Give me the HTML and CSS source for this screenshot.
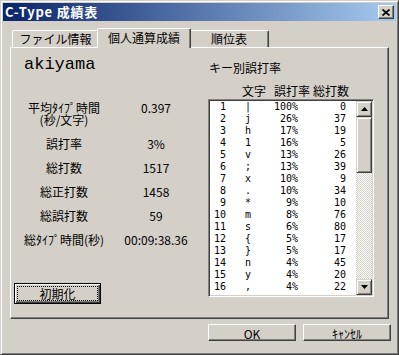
FILE: index.html
```html
<!DOCTYPE html>
<html lang="ja">
<head>
  <meta charset="UTF-8">
  <title>C-Type 成績表</title>
  <link rel="stylesheet" href="styles.css">
</head>
<body>
  <div class="window">
    <div class="titlebar">
      <span class="title">C-Type 成績表</span>
      <button class="close-btn" aria-label="閉じる">
        <svg width="8" height="7" viewBox="0 0 8 7">
          <path d="M0.5 0.5 L7.5 6.5 M7.5 0.5 L0.5 6.5" stroke="#000" stroke-width="1.7" fill="none"/>
        </svg>
      </button>
    </div>

    <!-- tab strip -->
    <div class="tabs">
      <div class="tab">ファイル情報</div>
      <div class="tab active">個人通算成績</div>
      <div class="tab last">順位表</div>
    </div>

    <div class="panel">
      <div class="left-col">
        <div class="username">akiyama</div>
        <div class="stats">
          <div class="stat-label">平均ﾀｲﾌﾟ時間<br>(秒/文字)</div><div class="stat-value">0.397</div>
          <div class="stat-label">誤打率</div><div class="stat-value">3%</div>
          <div class="stat-label">総打数</div><div class="stat-value">1517</div>
          <div class="stat-label">総正打数</div><div class="stat-value">1458</div>
          <div class="stat-label">総誤打数</div><div class="stat-value">59</div>
          <div class="stat-label">総ﾀｲﾌﾟ時間(秒)</div><div class="stat-value">00:09:38.36</div>
        </div>
        <button class="btn btn-default">初期化</button>
      </div>

      <div class="right-col">
        <div class="list-title">キー別誤打率</div>
        <div class="list-header">
          <span>文字</span><span>誤打率</span><span>総打数</span>
        </div>
        <div class="listbox">
          <div class="list-rows">
            <div class="row"><span class="num">1</span><span class="ch">|</span><span class="pct">100%</span><span class="cnt">0</span></div>
            <div class="row"><span class="num">2</span><span class="ch">j</span><span class="pct">26%</span><span class="cnt">37</span></div>
            <div class="row"><span class="num">3</span><span class="ch">h</span><span class="pct">17%</span><span class="cnt">19</span></div>
            <div class="row"><span class="num">4</span><span class="ch">1</span><span class="pct">16%</span><span class="cnt">5</span></div>
            <div class="row"><span class="num">5</span><span class="ch">v</span><span class="pct">13%</span><span class="cnt">26</span></div>
            <div class="row"><span class="num">6</span><span class="ch">;</span><span class="pct">13%</span><span class="cnt">39</span></div>
            <div class="row"><span class="num">7</span><span class="ch">x</span><span class="pct">10%</span><span class="cnt">9</span></div>
            <div class="row"><span class="num">8</span><span class="ch">.</span><span class="pct">10%</span><span class="cnt">34</span></div>
            <div class="row"><span class="num">9</span><span class="ch">*</span><span class="pct">9%</span><span class="cnt">10</span></div>
            <div class="row"><span class="num">10</span><span class="ch">m</span><span class="pct">8%</span><span class="cnt">76</span></div>
            <div class="row"><span class="num">11</span><span class="ch">s</span><span class="pct">6%</span><span class="cnt">80</span></div>
            <div class="row"><span class="num">12</span><span class="ch">{</span><span class="pct">5%</span><span class="cnt">17</span></div>
            <div class="row"><span class="num">13</span><span class="ch">}</span><span class="pct">5%</span><span class="cnt">17</span></div>
            <div class="row"><span class="num">14</span><span class="ch">n</span><span class="pct">4%</span><span class="cnt">45</span></div>
            <div class="row"><span class="num">15</span><span class="ch">y</span><span class="pct">4%</span><span class="cnt">20</span></div>
            <div class="row"><span class="num">16</span><span class="ch">,</span><span class="pct">4%</span><span class="cnt">22</span></div>
          </div>
          <div class="scrollbar">
            <div class="sb-btn">
              <svg width="7" height="4" viewBox="0 0 7 4"><path d="M3.5 0 L7 4 L0 4 Z" fill="#000"/></svg>
            </div>
            <div class="sb-thumb"></div>
            <div class="sb-track"></div>
            <div class="sb-btn">
              <svg width="7" height="4" viewBox="0 0 7 4"><path d="M0 0 L7 0 L3.5 4 Z" fill="#000"/></svg>
            </div>
          </div>
        </div>
      </div>
    </div>

    <div class="buttons">
      <button class="btn">OK</button>
      <button class="btn">ｷｬﾝｾﾙ</button>
    </div>
  </div>
</body>
</html>
```

FILE: styles.css
```css
* {
  box-sizing: border-box;
}

body {
  margin: 0;
  background-color: #d4d0c8;
  font-family: "Noto Sans CJK JP", "Liberation Sans", sans-serif;
  font-size: 12px;
  color: #000;
}

.window {
  width: 399px;
  height: 355px;
  padding: 2px;
  background-color: #d4d0c8;
  border: 1px solid;
  border-color: #d4d0c8 #404040 #404040 #d4d0c8;
  box-shadow: inset 1px 1px #fff, inset -1px -1px #808080;
}

/* title bar */
.titlebar {
  height: 18px;
  display: flex;
  align-items: center;
  justify-content: space-between;
  padding: 0 2px 0 2px;
  background: linear-gradient(to right, #0a246a, #a6caf0);
}

.title {
  color: #fff;
  font-weight: bold;
  font-size: 13px;
  letter-spacing: 0.8px;
  line-height: 18px;
}

.close-btn {
  width: 16px;
  height: 14px;
  padding: 0;
  margin: 0;
  display: flex;
  align-items: center;
  justify-content: center;
  background-color: #d4d0c8;
  border: 1px solid;
  border-color: #fff #404040 #404040 #fff;
  box-shadow: inset -1px -1px #808080;
}

/* tabs */
.tabs {
  display: flex;
  align-items: flex-end;
  height: 19px;
  margin: 7px 0 0 9px;
}

.tab {
  width: 87px;
  height: 17px;
  line-height: 15px;
  text-align: center;
  border: 1px solid;
  border-bottom: none;
  border-color: #fff #404040 transparent #fff;
  border-radius: 2px 2px 0 0;
  box-shadow: inset -1px 0 #808080;
}

.tab.active {
  position: relative;
  z-index: 1;
  width: 94px;
  height: 20px;
  margin: 0 -2px -1px -2px;
  line-height: 18px;
  background-color: #d4d0c8;
}

.tab.last {
  width: 80px;
}

/* panel */
.panel {
  display: flex;
  width: 379px;
  height: 272px;
  margin-left: 7px;
  padding: 7px 0 0 3px;
  border: 1px solid;
  border-color: #fff #404040 #404040 #fff;
  box-shadow: inset -1px -1px #808080;
}

.left-col {
  width: 194px;
  display: flex;
  flex-direction: column;
  align-items: flex-start;
}

.username {
  margin-left: 10px;
  font-family: "Liberation Mono", "DejaVu Sans Mono", monospace;
  font-size: 17px;
  line-height: 20px;
}

.stats {
  display: grid;
  grid-template-columns: 100px 84px;
  row-gap: 12px;
  margin-top: 27px;
  line-height: 12px;
  text-align: center;
}

.btn {
  font-family: "Noto Sans CJK JP", "Liberation Sans", sans-serif;
  font-size: 12px;
  color: #000;
  width: 88px;
  height: 17px;
  padding: 0;
  background-color: #d4d0c8;
  border: 1px solid;
  border-color: #fff #404040 #404040 #fff;
  box-shadow: inset -1px -1px #808080;
}

.btn-default {
  width: 87px;
  height: 21px;
  margin-top: 37px;
  border-color: #000;
  box-shadow: inset 1px 1px #fff, inset -1px -1px #404040, inset -2px -2px #808080;
  outline: 1px dotted #000;
  outline-offset: -4px;
}

/* key list */
.right-col {
  width: 166px;
  display: flex;
  flex-direction: column;
}

.list-title {
  margin-top: 7px;
  padding-left: 1px;
  line-height: 12px;
}

.list-header {
  display: grid;
  grid-template-columns: 34px 32px 39px auto;
  margin-top: 11px;
  line-height: 12px;
}

.list-header span:first-child {
  grid-column: 2;
}

.listbox {
  display: flex;
  height: 198px;
  margin-top: 2px;
  padding: 1px;
  background-color: #fff;
  border: 1px solid;
  border-color: #808080 #fff #fff #808080;
  box-shadow: inset 1px 1px #404040, inset -1px -1px #d4d0c8;
}

.list-rows {
  flex: 1;
  font-family: "DejaVu Sans Mono", "Liberation Mono", monospace;
  font-size: 10px;
}

.row {
  display: grid;
  grid-template-columns: 16px 44px 28px 48px;
  height: 12px;
  line-height: 12px;
}

.num, .pct, .cnt {
  text-align: right;
}

.ch {
  text-align: center;
}

.scrollbar {
  width: 16px;
  display: flex;
  flex-direction: column;
}

.sb-btn {
  height: 16px;
  display: flex;
  align-items: center;
  justify-content: center;
  background-color: #d4d0c8;
  border: 1px solid;
  border-color: #d4d0c8 #404040 #404040 #d4d0c8;
  box-shadow: inset 1px 1px #fff, inset -1px -1px #808080;
}

.sb-thumb {
  height: 56px;
  background-color: #d4d0c8;
  border: 1px solid;
  border-color: #d4d0c8 #404040 #404040 #d4d0c8;
  box-shadow: inset 1px 1px #fff, inset -1px -1px #808080;
}

.sb-track {
  flex: 1;
  background: repeating-conic-gradient(#d4d0c8 0 25%, #fff 0 50%) 0 0 / 2px 2px;
}

/* bottom buttons */
.buttons {
  display: flex;
  justify-content: flex-end;
  gap: 7px;
  margin-top: 5px;
  padding-right: 5px;
}
```
